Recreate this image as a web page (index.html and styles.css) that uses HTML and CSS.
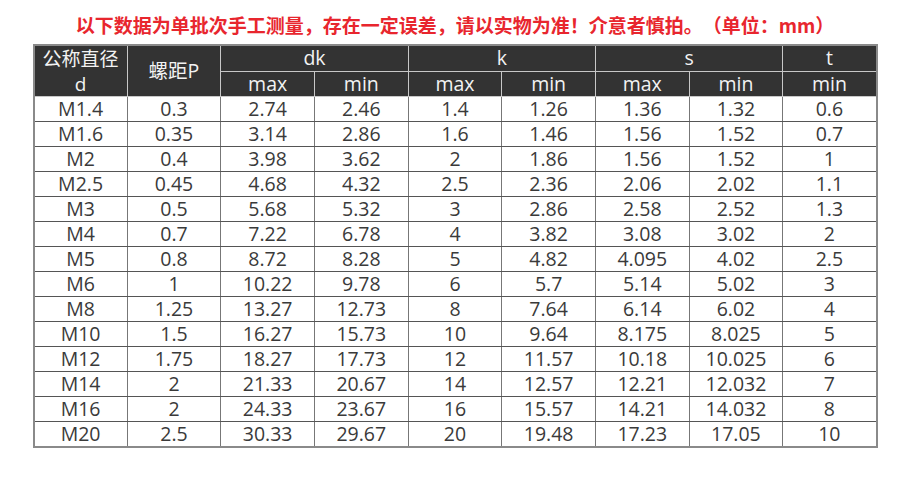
FILE: index.html
```html
<!DOCTYPE html>
<html lang="zh-CN">
<head>
<meta charset="utf-8">
<link rel="stylesheet" href="styles.css">
</head>
<body>
<h1 class="notice">以下数据为单批次手工测量，存在一定误差，请以实物为准！介意者慎拍。（单位：mm）</h1>
<table class="spec">
  <thead>
    <tr class="h1">
      <th rowspan="2" class="two"><span class="l1">公称直径</span><span class="l2">d</span></th>
      <th rowspan="2">螺距P</th>
      <th colspan="2">dk</th>
      <th colspan="2">k</th>
      <th colspan="2">s</th>
      <th>t</th>
    </tr>
    <tr class="h2">
      <th>max</th><th>min</th>
      <th>max</th><th>min</th>
      <th>max</th><th>min</th>
      <th>min</th>
    </tr>
  </thead>
  <tbody>
    <tr><td>M1.4</td><td>0.3</td><td>2.74</td><td>2.46</td><td>1.4</td><td>1.26</td><td>1.36</td><td>1.32</td><td>0.6</td></tr>
    <tr><td>M1.6</td><td>0.35</td><td>3.14</td><td>2.86</td><td>1.6</td><td>1.46</td><td>1.56</td><td>1.52</td><td>0.7</td></tr>
    <tr><td>M2</td><td>0.4</td><td>3.98</td><td>3.62</td><td>2</td><td>1.86</td><td>1.56</td><td>1.52</td><td>1</td></tr>
    <tr><td>M2.5</td><td>0.45</td><td>4.68</td><td>4.32</td><td>2.5</td><td>2.36</td><td>2.06</td><td>2.02</td><td>1.1</td></tr>
    <tr><td>M3</td><td>0.5</td><td>5.68</td><td>5.32</td><td>3</td><td>2.86</td><td>2.58</td><td>2.52</td><td>1.3</td></tr>
    <tr><td>M4</td><td>0.7</td><td>7.22</td><td>6.78</td><td>4</td><td>3.82</td><td>3.08</td><td>3.02</td><td>2</td></tr>
    <tr><td>M5</td><td>0.8</td><td>8.72</td><td>8.28</td><td>5</td><td>4.82</td><td>4.095</td><td>4.02</td><td>2.5</td></tr>
    <tr><td>M6</td><td>1</td><td>10.22</td><td>9.78</td><td>6</td><td>5.7</td><td>5.14</td><td>5.02</td><td>3</td></tr>
    <tr><td>M8</td><td>1.25</td><td>13.27</td><td>12.73</td><td>8</td><td>7.64</td><td>6.14</td><td>6.02</td><td>4</td></tr>
    <tr><td>M10</td><td>1.5</td><td>16.27</td><td>15.73</td><td>10</td><td>9.64</td><td>8.175</td><td>8.025</td><td>5</td></tr>
    <tr><td>M12</td><td>1.75</td><td>18.27</td><td>17.73</td><td>12</td><td>11.57</td><td>10.18</td><td>10.025</td><td>6</td></tr>
    <tr><td>M14</td><td>2</td><td>21.33</td><td>20.67</td><td>14</td><td>12.57</td><td>12.21</td><td>12.032</td><td>7</td></tr>
    <tr><td>M16</td><td>2</td><td>24.33</td><td>23.67</td><td>16</td><td>15.57</td><td>14.21</td><td>14.032</td><td>8</td></tr>
    <tr><td>M20</td><td>2.5</td><td>30.33</td><td>29.67</td><td>20</td><td>19.48</td><td>17.23</td><td>17.05</td><td>10</td></tr>
  </tbody>
</table>
</body>
</html>
```
FILE: styles.css
```css
html, body {
  margin: 0;
  padding: 0;
  background: #ffffff;
}
body {
  width: 910px;
  height: 480px;
  overflow: hidden;
  font-family: "Open Sans", "Noto Sans CJK SC", sans-serif;
}
.notice {
  margin: 0;
  height: 44px;
  padding-top: 13px;
  box-sizing: border-box;
  text-align: center;
  font-family: "Noto Sans CJK SC", sans-serif;
  font-size: 19px;
  line-height: 24px;
  font-weight: bold;
  color: #e8262e;
  text-spacing-trim: space-all;
}
.spec {
  width: 845px;
  margin: 0 auto;
  border-collapse: collapse;
  table-layout: fixed;
  border: 2px solid #8a8a8a;
  font-size: 19.5px;
  color: #3a3a3a;
}
.spec th, .spec td {
  padding: 0;
  text-align: center;
  vertical-align: middle;
  font-weight: normal;
  white-space: nowrap;
}
.spec th {
  background: #333333;
  color: #f2f2f2;
  border: 1px solid #c8c8c8;
  line-height: 24px;
}
.spec th.two {
  font-size: 19px;
}
.spec th.two .l1 {
  display: block;
  font-family: "Noto Sans CJK SC", sans-serif;
  line-height: 23px;
}
.spec th.two .l2 {
  display: block;
  margin-top: 3px;
  line-height: 24px;
}
.spec .h1 th, .spec .h2 th {
  height: 24px;
}
.spec td {
  border: 1px solid #555555;
  border-left-color: #777777;
  border-right-color: #777777;
  height: 24px;
  line-height: 24px;
}
```
